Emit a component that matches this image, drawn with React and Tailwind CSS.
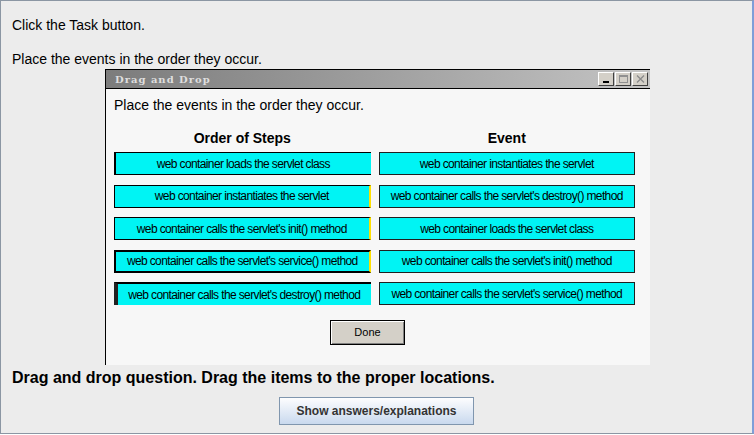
export default function App() {
  const steps = [
    { text: "web container loads the servlet class", cls: "border-y border-l-2 border-black border-r-0" },
    { text: "web container instantiates the servlet", cls: "border border-black border-r-2 border-r-[#ffe000]" },
    { text: "web container calls the servlet's init() method", cls: "border border-black border-r-2 border-r-[#ffe000]" },
    { text: "web container calls the servlet's service() method", cls: "border-2 border-black border-r-2 border-r-[#ffe000]" },
    { text: "web container calls the servlet's destroy() method", cls: "border-t-2 border-black border-l-[4px] border-l-[#222] border-b-0 border-r-0" },
  ];
  const events = [
    "web container instantiates the servlet",
    "web container calls the servlet's destroy() method",
    "web container loads the servlet class",
    "web container calls the servlet's init() method",
    "web container calls the servlet's service() method",
  ];

  return (
    <div className="w-[754px] h-[434px] bg-[#ececec] border border-[#8b96a3] border-r-2 border-r-[#7f9ed8] font-['Liberation_Sans',Arial,sans-serif] text-black overflow-hidden">
      <div className="pl-[11px] pt-[15px] text-[14px] leading-[18px]">Click the Task button.</div>
      <div className="pl-[11px] mt-[16px] text-[14px] leading-[18px]">Place the events in the order they occur.</div>

      {/* Drag and Drop window */}
      <div className="ml-[104px] mt-[1px] w-[545px] border-l border-black bg-[#f7f7f7]">
        <div className="h-[20px] flex items-center justify-between border-y border-black bg-gradient-to-r from-[#7c7c7c] to-[#c4c4c4] pl-[9px] pr-[2px]">
          <span className="font-['DejaVu_Serif',serif] font-bold text-[10px] tracking-[1px] text-[#dedede]">Drag and Drop</span>
          <div className="flex gap-[1px]">
            <div className="w-[16px] h-[14px] bg-[#d4d0c8] border border-t-white border-l-white border-r-[#404040] border-b-[#404040] flex items-end justify-center pb-[2px]">
              <div className="w-[6px] h-[2px] bg-black" />
            </div>
            <div className="w-[16px] h-[14px] bg-[#d4d0c8] border border-t-white border-l-white border-r-[#404040] border-b-[#404040] flex items-center justify-center">
              <div className="w-[9px] h-[8px] border border-[#909090] border-t-2" />
            </div>
            <div className="w-[16px] h-[14px] bg-[#d4d0c8] border border-t-white border-l-white border-r-[#404040] border-b-[#404040] flex items-center justify-center">
              <svg width="9" height="8" viewBox="0 0 9 8">
                <path d="M1 0.5 L8 7.5 M8 0.5 L1 7.5" stroke="#8a8a8a" strokeWidth="1.3" />
              </svg>
            </div>
          </div>
        </div>

        <div className="h-[276px] pl-[8px] pr-[15px] pt-[7px]">
          <div className="text-[14px] leading-[18px]">Place the events in the order they occur.</div>

          <div className="grid grid-cols-2 gap-x-[8px] mt-[16px]">
            <div className="text-center font-bold text-[14px] leading-[17px]">Order of Steps</div>
            <div className="text-center font-bold text-[14px] leading-[17px]">Event</div>
          </div>

          <div className="grid grid-cols-2 gap-x-[8px] mt-[5px]">
            <div className="flex flex-col gap-[9.5px]">
              {steps.map((s) => (
                <div key={s.text} className={`h-[23px] bg-[#00f4f4] flex items-center justify-center text-[12px] tracking-[-0.62px] ${s.cls}`}>
                  {s.text}
                </div>
              ))}
            </div>
            <div className="flex flex-col gap-[9.5px]">
              {events.map((e) => (
                <div key={e} className="h-[23px] bg-[#00f4f4] border border-[#202020] flex items-center justify-center text-[12px] tracking-[-0.62px]">
                  {e}
                </div>
              ))}
            </div>
          </div>

          <div className="mt-[15px] ml-[216px] w-[75px] h-[25px] bg-[#d4d0c8] border border-black shadow-[inset_1px_1px_0_#fff,inset_-1px_-1px_0_#808080] flex items-center justify-center text-[11px]">
            Done
          </div>
        </div>
      </div>

      <div className="pl-[11px] mt-[3px] font-bold text-[16px] leading-[20px]">Drag and drop question. Drag the items to the proper locations.</div>

      <div className="flex justify-center mt-[9px]">
        <div className="w-[195px] h-[28px] border border-[#8096ae] bg-gradient-to-b from-[#fdfdfe] to-[#c9d9ee] flex items-center justify-center font-bold text-[12px] text-[#333]">
          Show answers/explanations
        </div>
      </div>
    </div>
  );
}
